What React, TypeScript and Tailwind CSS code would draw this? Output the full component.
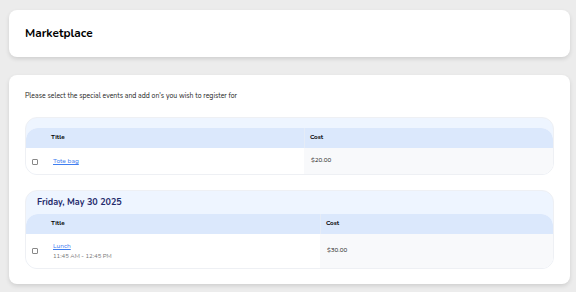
export default function App() {
  return (
    <div className="min-h-[292px] w-[576px] bg-[#ececec] px-[9px] pt-[10px] pb-[8px] font-['Nunito','Lato',sans-serif] text-[#1f2937]">
      <div className="flex h-[47px] w-[561px] items-center rounded-[8px] bg-white px-4 shadow-[0_2px_4px_rgba(0,0,0,0.12)]">
        <h1 className="text-[11.8px] font-bold text-black">Marketplace</h1>
      </div>

      <div className="mt-[18px] w-[561px] rounded-[8px] bg-white px-4 pt-[16px] pb-[15px] shadow-[0_2px_4px_rgba(0,0,0,0.12)]">
        <p className="text-[6.9px] leading-[10px] text-[#222]">Please select the special events and add on's you wish to register for</p>

        {/* Group without date */}
        <div className="mt-[16px] overflow-hidden rounded-[12px] border border-[#eef0f4] bg-[#eef5ff]">
          <div className="h-[10px]" />
          <div className="overflow-hidden rounded-t-[12px] bg-white">
            <div className="flex h-[20px] items-center bg-[#dbe8fc] text-[6.3px] font-bold text-black">
              <div className="w-[278px] pl-[25px]">Title</div>
              <div className="flex h-full flex-1 items-center border-l border-[#e5ecf7] pl-[5px]">Cost</div>
            </div>
            <div className="flex h-[26px] items-center">
              <div className="flex w-[278px] items-center pl-[6px]">
                <span className="mt-[3px] h-[6px] w-[6px] rounded-[1px] border border-[#888] bg-white" />
                <a href="#" className="ml-[15px] text-[6.6px] text-[#3f7ef0] underline">Tote bag</a>
              </div>
              <div className="flex h-full flex-1 items-center bg-[#f8f9fb] pl-[7px] text-[6.3px] text-[#222]">$20.00</div>
            </div>
          </div>
        </div>

        {/* Friday group */}
        <div className="mt-[15px] overflow-hidden rounded-[12px] border border-[#eef0f4] bg-[#eef5ff]">
          <div className="flex h-[23px] items-center pl-[11px] text-[9px] font-bold text-[#1e2a6b]">Friday, May 30 2025</div>
          <div className="overflow-hidden rounded-t-[12px] bg-white">
            <div className="flex h-[20px] items-center bg-[#dbe8fc] text-[6.3px] font-bold text-black">
              <div className="w-[294px] pl-[25px]">Title</div>
              <div className="flex h-full flex-1 items-center border-l border-[#e5ecf7] pl-[5px]">Cost</div>
            </div>
            <div className="flex h-[34px] items-center">
              <div className="flex w-[294px] items-center pl-[6px]">
                <span className="h-[6px] w-[6px] rounded-[1px] border border-[#888] bg-white" />
                <div className="ml-[15px] flex flex-col">
                  <a href="#" className="text-[6.6px] leading-[10px] text-[#3f7ef0] underline">Lunch</a>
                  <span className="text-[6px] leading-[11px] text-[#777]">11:45 AM - 12:45 PM</span>
                </div>
              </div>
              <div className="flex h-full flex-1 items-center bg-[#f8f9fb] pl-[7px] text-[6.3px] text-[#222]">$30.00</div>
            </div>
          </div>
        </div>
      </div>
    </div>
  );
}
